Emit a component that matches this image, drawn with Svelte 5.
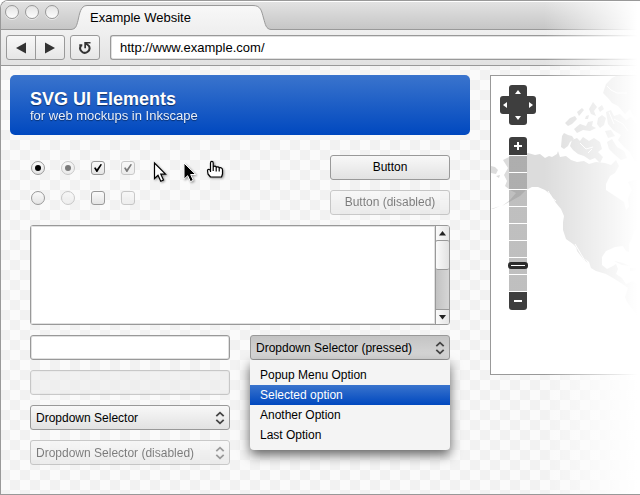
<script>
  let url = $state('http://www.example.com/');
  let choice = $state('first');
  let zoom = $state(18);
  let selected = $state(1);
  const options = ['Popup Menu Option', 'Selected option', 'Another Option', 'Last Option'];
</script>

{#snippet chevrons()}
  <svg class="chevrons" width="10" height="14" viewBox="0 0 10 14" aria-hidden="true">
    <path d="M1.300 5.200 5 1.700 8.700 5.200M1.300 8.800 5 12.300 8.700 8.800" fill="none" stroke="#444" stroke-width="1.800" />
  </svg>
{/snippet}

<div class="browser">
  <header class="titlebar">
    <div class="lights">
      <button aria-label="Close"></button>
      <button aria-label="Minimize"></button>
      <button aria-label="Maximize"></button>
    </div>
    <div class="tab">
      <svg width="200" height="26" viewBox="0 0 200 26" aria-hidden="true">
        <defs>
          <linearGradient id="tabfill" x1="0" y1="0" x2="0" y2="1">
            <stop offset="0" stop-color="#f8f8f8" />
            <stop offset="1" stop-color="#efefef" />
          </linearGradient>
        </defs>
        <path d="M0 24.5C5 24 5.500 21 7 15.500 8.500 9 9.500 .5 16 .5H182C190 .5 190.500 6 192.500 13 194.500 20 195 24 200 24.500V26H0Z" fill="url(#tabfill)" />
        <path d="M0 24.500C5 24 5.500 21 7 15.500 8.500 9 9.500 .5 16 .5H182C190 .5 190.500 6 192.500 13 194.500 20 195 24 200 24.500" fill="none" stroke="#999" />
      </svg>
      <span>Example Website</span>
    </div>
  </header>

  <nav class="toolbar">
    <div class="history">
      <button aria-label="Back"><svg width="10" height="12" viewBox="0 0 10 12"><path d="M0 6 10 .5v11z" fill="#333" /></svg></button>
      <button aria-label="Forward"><svg width="10" height="12" viewBox="0 0 10 12"><path d="M10 6 0 .5v11z" fill="#333" /></svg></button>
    </div>
    <button class="reload" aria-label="Reload">
      <svg width="14" height="14" viewBox="0 0 14 14">
        <path d="M1.300 4.300H4.300M3.200 4.300A4.600 4.600 0 1 0 10.800 4.800L8 2.400" fill="none" stroke="#333" stroke-width="2" />
        <path d="M6.300 1H12.500V2.600H9.400L8 3.900V7.200H6.300Z" fill="#333" />
      </svg>
    </button>
    <input class="address" type="text" aria-label="Address" bind:value={url} />
  </nav>

  <main>
    <section class="elements">
      <div class="banner">
        <h1>SVG UI Elements</h1>
        <p>for web mockups in Inkscape</p>
      </div>

      <div class="form">
        <div class="samples">
          <div class="ticks">
            <input type="radio" name="choice" value="first" aria-label="First" bind:group={choice} />
            <input type="radio" name="off" aria-label="Selected, disabled" checked disabled />
            <input type="checkbox" aria-label="Checked" checked />
            <input type="checkbox" aria-label="Checked, disabled" checked disabled />
            <input type="radio" name="choice" value="second" aria-label="Second" bind:group={choice} />
            <input type="radio" name="off" aria-label="Unselected, disabled" disabled />
            <input type="checkbox" aria-label="Unchecked" />
            <input type="checkbox" aria-label="Unchecked, disabled" disabled />
          </div>
          <div class="cursors" aria-hidden="true">
            <svg width="20" height="24" viewBox="0 0 20 24">
              <path d="M2.500 3V18.500L6 15.200 8.800 21.300 11.500 20 8.800 14.200H13.500Z" fill="#fff" stroke="#000" stroke-width="1.200" />
            </svg>
            <svg width="20" height="24" viewBox="0 0 20 24">
              <path d="M5 3V19.200L8.700 15.700 11.400 21.600 14.300 20.300 11.600 14.500H16.700Z" fill="#000" stroke="#fff" stroke-width="1" />
            </svg>
            <svg width="20" height="24" viewBox="0 0 20 24">
              <path d="M4.500 10.500V3C4.500 .8 7.200 .8 7.200 3V7C8.200 5.800 10 6 10.200 7.300 11.200 6.400 12.900 6.800 13.200 8 14.700 7.200 16.500 8.200 16.500 10V14L15.500 17H4.500L2 14 1.500 10.500C1.500 9 3.500 8.800 4.500 10.500V12M7.200 7V11M10.200 7.300V11.500M13.200 8V11.500" fill="#fff" stroke="#000" stroke-width="1.200" stroke-linejoin="round" />
            </svg>
          </div>
          <div class="buttons">
            <button class="control">Button</button>
            <button class="control" disabled>Button (disabled)</button>
          </div>
        </div>

        <div class="area">
          <textarea aria-label="Text area"></textarea>
          <div class="scrollbar" aria-hidden="true">
            <div class="step"><svg width="7" height="5" viewBox="0 0 7 5"><path d="M3.500 0 7 4.500H0z" fill="#222" /></svg></div>
            <div class="thumb"></div>
            <div class="track"></div>
            <div class="step"><svg width="7" height="5" viewBox="0 0 7 5"><path d="M3.500 4.500 7 0H0z" fill="#222" /></svg></div>
          </div>
        </div>

        <div class="columns">
          <div class="column">
            <input class="control field" type="text" aria-label="Text field" />
            <input class="control field" type="text" aria-label="Disabled text field" disabled />
            <div class="dropdown">
              <select class="control" aria-label="Dropdown"><option>Dropdown Selector</option></select>
              {@render chevrons()}
            </div>
            <div class="dropdown off">
              <select class="control" aria-label="Disabled dropdown" disabled><option>Dropdown Selector (disabled)</option></select>
              {@render chevrons()}
            </div>
          </div>
          <div class="column">
            <div class="dropdown">
              <select class="control pressed" aria-label="Pressed dropdown"><option>Dropdown Selector (pressed)</option></select>
              {@render chevrons()}
              <div class="menu" role="listbox" aria-label="Options">
                {#each options as option, i}
                  <button role="option" aria-selected={selected === i} onclick={() => (selected = i)}>{option}</button>
                {/each}
              </div>
            </div>
          </div>
        </div>
      </div>
    </section>

    <section class="map" aria-label="Map">
      <svg class="land" width="150" height="298" viewBox="491 76 150 298" aria-hidden="true">
        <g fill="#dcdcdc">
          <path d="M509 157 513 154 520 155 528 153 535 155 540 154 545 158 549 156 552 157 557 154 558 151 560 157 566 156 571 160 577 162 584 161 589 164 596 162 605 163 611 165 616 160 619 166 615 173 610 176 606 184 606 190 612 194 618 198 624 202 626 210 629 207 628 198 632 190 628 182 640 178V225L634 232 632 238 629 244 629 252 626 251 623 246 615 247 606 251 602 257 602 265 607 269 613 266 616 264 618 269 616 274 622 278 626 284 633 281 640 285V320L634 311 627 302 625 297 628 288 621 283 613 278 606 274 596 271 591 268 589 262 583 257 578 249 573 244 566 239 563 230 563 222 564 216 561 209 556 203 551 195 545 190 538 187 532 187 526 190 520 196 511 201 502 206 510 200 516 193 510 190 505 186 507 181 504 175 508 168 503 160Z" />
          <path d="M576 246 583 256 588 263 584 260 577 251Z" />
          <path d="M562 136 564 133 568 135 572 136 574 139 570 142 568 146 564 149 561 147Z" />
          <path d="M572 140 577 138 580 141 583 137 589 141 594 138 600 142 602 149 598 152 603 157 600 163 595 158 590 160 584 156 578 154 573 150 570 146Z" />
          <path d="M565 123 570 118 575 116 577 119 572 124 568 126ZM577 112 582 108 584 110 579 116ZM574 129 580 124 586 126 588 122 593 121 592 126 596 128 590 131 583 130 577 133ZM589 109 593 102 597 107 594 111 596 116 591 114ZM598 118 602 115 606 118 604 125 600 128 597 124ZM586 116 589 115 588 119 585 119ZM598 108 602 105 604 109 600 112Z" />
          <path d="M603 93 606 84 612 78 616 76H640V118L633 116 630 109 625 114 618 106 612 103 608 98Z" />
          <path d="M606 112 611 110 614 116 620 114 626 120 631 117 636 124 640 125V165L634 160 630 152 624 147 618 140 621 135 613 130 608 124Z" />
          <path d="M607 142 612 139 617 147 624 151 627 158 621 160 614 154 609 149ZM605 131 611 130 615 136 608 138Z" />
          <path d="M491 166 495 167 498 170 496 174 491 173ZM496 176 500 175 499 178ZM491 209 500 206 493 209Z" />
          <path d="M614 261 623 263 630 266 622 265ZM630 268 637 268 635 271 630 271ZM610 147 615 149 613 152Z" />
        </g>
        <g fill="none" stroke="#fff" stroke-width="1">
          <path d="M575 244 585 261M607 86 611 90 617 93 627 93M614 119 623 124 628 131M548 191 552 198 556 201M580 143 586 149 593 147M609 112 614 124M588 153 592 149" />
        </g>
      </svg>
      <div class="pan">
        <button class="up" aria-label="Pan up"><svg width="6" height="4" viewBox="0 0 6 4"><path d="M3 0 6 4H0z" fill="#fff" /></svg></button>
        <button class="left" aria-label="Pan left"><svg width="4" height="6" viewBox="0 0 4 6"><path d="M0 3 4 0V6z" fill="#fff" /></svg></button>
        <span class="hub"></span>
        <button class="right" aria-label="Pan right"><svg width="4" height="6" viewBox="0 0 4 6"><path d="M4 3 0 0V6z" fill="#fff" /></svg></button>
        <button class="down" aria-label="Pan down"><svg width="6" height="4" viewBox="0 0 6 4"><path d="M3 4 6 0H0z" fill="#fff" /></svg></button>
      </div>
      <div class="zoom">
        <button class="in" aria-label="Zoom in" onclick={() => (zoom += 12)}><svg width="8" height="8" viewBox="0 0 8 8"><path d="M4 0V8M0 4H8" stroke="#fff" stroke-width="2" /></svg></button>
        <input type="range" min="0" max="100" aria-label="Zoom level" bind:value={zoom} />
        <button class="out" aria-label="Zoom out" onclick={() => (zoom -= 12)}><svg width="8" height="8" viewBox="0 0 8 8"><path d="M0 4H8" stroke="#fff" stroke-width="2" /></svg></button>
      </div>
    </section>
  </main>
</div>

<style>
  :global(body) {
    background: #fff;
  }

  .browser,
  .browser * {
    box-sizing: border-box;
    font-family: 'Liberation Sans', Arial, sans-serif;
  }

  .browser {
    position: relative;
    display: flex;
    flex-direction: column;
    min-height: 100vh;
    overflow: hidden;
    border: 1px solid #999;
    border-right: 0;
    border-radius: 8px 0 0 0;
    background: conic-gradient(#f2f2f2 25%, #fafafa 0 50%, #f2f2f2 0 75%, #fafafa 0) border-box;
    background-size: 20px 20px;
    background-origin: border-box;
    color: #000;
    font-size: 12px;
  }

  /* The window dissolves into the page along its right side. */
  .browser::after {
    content: '';
    position: absolute;
    inset: -1px 0 -1px auto;
    width: 96px;
    background: linear-gradient(to right, rgba(255, 255, 255, 0), #fff 97%);
    pointer-events: none;
  }

  svg {
    display: block;
  }

  button {
    display: flex;
    align-items: center;
    justify-content: center;
    margin: 0;
    padding: 0;
    border: 0;
    background: none;
    color: inherit;
    font-size: 12px;
  }

  .titlebar {
    display: flex;
    height: 29px;
    border-top: 1px solid #fff;
    border-bottom: 1px solid #999;
    background: linear-gradient(#e2e2e2, #c6c6c6);
  }

  .lights {
    display: flex;
    gap: 6px;
    padding: 3px 0 0 4px;
  }

  .lights button {
    width: 14px;
    height: 14px;
    border: 1px solid #999;
    border-radius: 50%;
    background: linear-gradient(#e4e4e4, #fcfcfc);
    box-shadow: 0 1px 0 rgba(255, 255, 255, 0.5);
  }

  .tab {
    position: relative;
    width: 200px;
    height: 28px;
    margin-left: 12px;
    padding: 8px 0 0 19px;
    font-size: 13px;
    line-height: 16px;
  }

  .tab svg {
    position: absolute;
    left: 0;
    top: 3px;
  }

  .tab span {
    position: relative;
  }

  .toolbar {
    display: flex;
    gap: 5px;
    height: 36px;
    padding: 5px 0 5px 5px;
    border-bottom: 1px solid #999;
    background: linear-gradient(#f0f0f0, #e2e2e2);
  }

  .history,
  .reload {
    display: flex;
    height: 25px;
    border: 1px solid #999;
    border-radius: 3px;
    background: linear-gradient(#f8f8f8, #e6e6e6);
  }

  .history button {
    width: 28px;
  }

  .history button + button {
    width: 29px;
    border-left: 1px solid #999;
  }

  .reload {
    width: 30px;
  }

  .address {
    flex: 1;
    min-width: 0;
    height: 25px;
    margin: 0 0 0 5px;
    padding: 0 9px;
    border: 1px solid #999;
    border-right: 0;
    border-radius: 3px 0 0 3px;
    background: #fff;
    box-shadow: inset 0 0 0 1px #e0e0e0;
    color: #000;
    font-size: 13px;
  }

  main {
    display: flex;
    flex: 1;
    align-items: flex-start;
    gap: 20px;
    padding: 9px 0 20px 9px;
  }

  .elements {
    flex: 0 1 460px;
  }

  .banner {
    height: 60px;
    padding: 14px 20px 0;
    border-radius: 5px;
    background: linear-gradient(#3a74cd, #0048bf);
    color: #fff;
    text-shadow: 0 1px 1px rgba(0, 0, 0, 0.5);
  }

  h1 {
    margin: 0;
    font-size: 18px;
    line-height: 20px;
  }

  p {
    margin: 0;
    font-size: 13px;
    line-height: 14px;
    opacity: 0.9;
  }

  .form {
    display: flex;
    flex-direction: column;
    gap: 10px;
    padding: 20px 20px 0;
  }

  .samples {
    display: flex;
    align-items: flex-start;
  }

  .ticks {
    display: grid;
    grid-template-columns: repeat(4, 16px);
    grid-auto-rows: 16px;
    gap: 14px;
    place-items: center;
    padding-top: 5px;
  }

  .ticks input {
    appearance: none;
    display: grid;
    place-items: center;
    width: 14px;
    height: 14px;
    margin: 0;
    border: 1px solid #999;
    border-radius: 3px;
    background: linear-gradient(#fafafa, #e4e4e4);
  }

  .ticks input[type='radio'] {
    border-radius: 50%;
  }

  .ticks input[type='radio']:checked::before {
    content: '';
    width: 6px;
    height: 6px;
    border-radius: 50%;
    background: #000;
  }

  .ticks input[type='checkbox']:checked::before {
    content: '';
    width: 8px;
    height: 8px;
    background: #000;
    clip-path: polygon(0 50%, 18% 42%, 36% 66%, 82% 0, 100% 6%, 42% 100%, 30% 100%);
  }

  .ticks input:disabled,
  .control:disabled {
    opacity: 0.5;
  }

  .cursors {
    display: flex;
    gap: 7px;
    margin-left: 16px;
    padding-top: 5px;
  }

  .cursors svg {
    filter: drop-shadow(1px 1px 1px rgba(0, 0, 0, 0.4));
  }

  .buttons {
    display: flex;
    flex-direction: column;
    gap: 10px;
    width: 120px;
    margin-left: auto;
  }

  .control {
    width: 100%;
    height: 25px;
    margin: 0;
    border: 1px solid #999;
    border-radius: 3px;
    background: linear-gradient(#f8f8f8, #e2e2e2);
    color: #000;
    font-size: 12px;
  }

  .buttons .control {
    padding-bottom: 2px;
  }

  .field {
    padding: 0 5px;
    background: #fff;
    box-shadow: inset 0 0 0 1px #e0e0e0;
  }

  .field:disabled {
    background: #ececec;
  }

  .area {
    display: flex;
    height: 100px;
    overflow: hidden;
    border: 1px solid #999;
    border-radius: 3px;
    background: #fff;
  }

  textarea {
    flex: 1;
    min-width: 0;
    margin: 0;
    padding: 5px;
    border: 0;
    background: #fff;
    box-shadow: inset 0 0 0 1px #e0e0e0;
    font-size: 12px;
    resize: none;
  }

  .scrollbar {
    display: flex;
    flex-direction: column;
    width: 14px;
    border-left: 1px solid #999;
    background: linear-gradient(to right, #c2c2c2, #d6d6d6);
  }

  .step {
    display: grid;
    place-items: center;
    height: 14px;
    background: linear-gradient(to right, #fafafa, #e6e6e6);
  }

  .thumb {
    height: 30px;
    border: 1px solid #999;
    border-width: 1px 0;
    border-radius: 2px;
    background: linear-gradient(to right, #fafafa, #e2e2e2);
  }

  .track {
    flex: 1;
    border-bottom: 1px solid #999;
  }

  .columns {
    display: flex;
    gap: 20px;
  }

  .column {
    display: flex;
    flex: 1;
    flex-direction: column;
    gap: 10px;
  }

  .dropdown {
    position: relative;
  }

  .dropdown select {
    appearance: none;
    display: block;
    padding: 0 20px 0 5px;
  }

  .dropdown .pressed {
    background: linear-gradient(#c4c4c4, #d8d8d8);
  }

  .chevrons {
    position: absolute;
    right: 5px;
    top: 6px;
    pointer-events: none;
  }

  .off .chevrons {
    opacity: 0.5;
  }

  .menu {
    position: absolute;
    inset: 25px 0 auto;
    padding: 5px 0;
    border-radius: 0 0 4px 4px;
    background: #f4f4f4;
    box-shadow: 0 5px 12px rgba(0, 0, 0, 0.6);
  }

  .menu button {
    justify-content: flex-start;
    width: 100%;
    height: 20px;
    padding: 0 10px;
  }

  .menu button[aria-selected='true'] {
    background: linear-gradient(#3a74cd, #0048bf);
    color: #fff;
  }

  .map {
    position: relative;
    flex: 1;
    min-width: 0;
    height: 300px;
    overflow: hidden;
    border: 1px solid #999;
    border-right: 0;
    background: #fff;
  }

  .pan {
    position: absolute;
    left: 9px;
    top: 9px;
    display: grid;
    grid-template: 11px 18px 11px / 9px 18px 9px;
    grid-template-areas: '. up .' 'left hub right' '. down .';
  }

  .pan button,
  .hub {
    background: #3e3e3e;
  }

  .up {
    grid-area: up;
    padding-top: 3px;
    border-radius: 3px 3px 0 0;
  }

  .down {
    grid-area: down;
    padding-bottom: 3px;
    border-radius: 0 0 3px 3px;
  }

  .left {
    grid-area: left;
    padding-left: 1px;
    border-radius: 3px 0 0 3px;
  }

  .right {
    grid-area: right;
    padding-right: 1px;
    border-radius: 0 3px 3px 0;
  }

  .hub {
    grid-area: hub;
  }

  .zoom {
    position: absolute;
    left: 17px;
    top: 61px;
    display: flex;
    flex-direction: column;
    align-items: center;
    width: 20px;
  }

  .zoom button {
    width: 18px;
    height: 18px;
    background: #3e3e3e;
  }

  .zoom .in {
    border-radius: 3px 3px 0 0;
  }

  .zoom .out {
    border-radius: 0 0 3px 3px;
  }

  .zoom input {
    appearance: none;
    writing-mode: vertical-lr;
    direction: rtl;
    width: 20px;
    height: 137px;
    margin: 0;
    background: repeating-linear-gradient(#fff 0 1px, rgba(128, 128, 128, 0.5) 1px 17px) center / 18px 100% no-repeat;
  }

  .zoom input::-webkit-slider-thumb {
    appearance: none;
    width: 20px;
    height: 7px;
    border: 3px solid #2c2c2c;
    border-radius: 3px;
    background: #fff;
  }
</style>
